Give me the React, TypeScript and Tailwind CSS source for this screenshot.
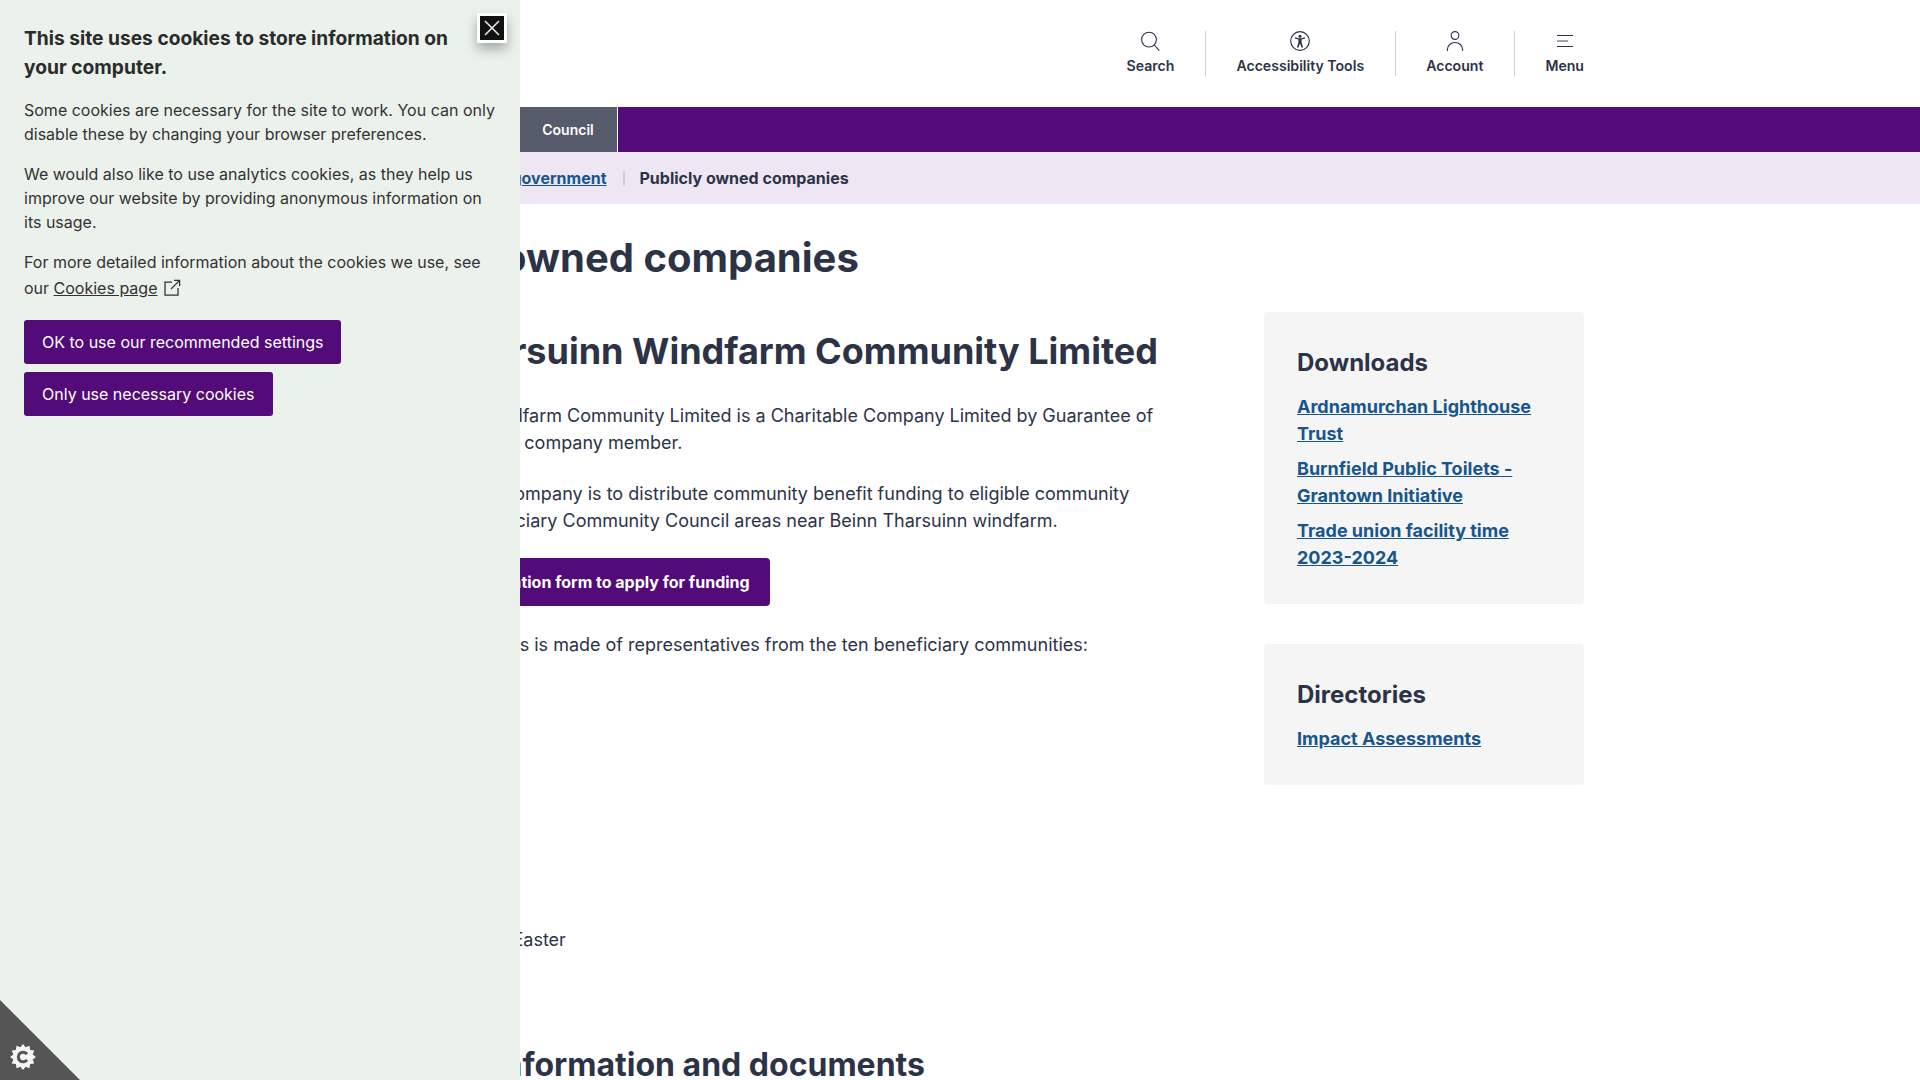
const communities = [
  "Ardross",
  "Alness",
  "Bonar Bridge",
  "Edderton",
  "Evanton",
  "Invergordon",
  "Kincardine",
  "Strathpeffer",
  "Tain",
  "Kilmuir and Logie Easter",
];

const downloads = [
  ["Ardnamurchan Lighthouse", "Trust"],
  ["Burnfield Public Toilets -", "Grantown Initiative"],
  ["Trade union facility time", "2023-2024"],
];

function SearchIcon() {
  return (
    <svg viewBox="0 0 20 20" className="h-5 w-5" fill="none" stroke="#2c3347" strokeWidth="1.1">
      <circle cx="9" cy="8.6" r="7.4" />
      <path d="M14.3 14l5 5.6" />
    </svg>
  );
}

function AccessibilityIcon() {
  return (
    <svg viewBox="0 0 20 20" className="h-5 w-5" fill="none">
      <circle cx="10" cy="10" r="9.3" stroke="#2c3347" strokeWidth="1.2" />
      <circle cx="10" cy="5.2" r="1.5" fill="#2c3347" />
      <path d="M4.8 7.4l3.6 1v3.2l-1.5 4.7 1.4.4 1.7-4.2 1.7 4.2 1.4-.4-1.5-4.7V8.400l3.600-1-.3-1.100-3.700.9H8.800l-3.700-.9z" fill="#2c3347" />
    </svg>
  );
}

function AccountIcon() {
  return (
    <svg viewBox="0 0 20 20" className="h-5 w-5" fill="none" stroke="#2c3347" strokeWidth="1.1">
      <circle cx="10" cy="4.500" r="3.900" />
      <path d="M2.400 20v-1.500c0-4 3.400-7 7.600-7s7.600 3 7.600 7V20" />
    </svg>
  );
}

function MenuIcon() {
  return (
    <svg viewBox="0 0 20 20" className="h-5 w-5" fill="none" strokeWidth="1.100">
      <path d="M2 4.500h16M2 15.500h16" stroke="#2c3347" />
      <path d="M2 10h11" stroke="#7c8090" strokeWidth="1.400" />
    </svg>
  );
}

function ExternalIcon() {
  return (
    <svg viewBox="0 0 18 18" className="ml-[6px] inline-block h-[18px] w-[18px] align-[-3px]" fill="none" stroke="#333" strokeWidth="1.300">
      <path d="M9 3.200H2v13h13V9" />
      <path d="M8 10l8.400-8.400M11 1.400h5.600V7" />
    </svg>
  );
}

function CookieGear() {
  const pts: string[] = [];
  for (let i = 0; i < 24; i++) {
    const r = i % 2 === 0 ? 13 : 10;
    const a = (i * Math.PI) / 12;
    pts.push(`${13 + r * Math.sin(a)},${13 - r * Math.cos(a)}`);
  }
  return (
    <svg viewBox="0 0 26 26" className="h-[26px] w-[26px]">
      <polygon points={pts.join(" ")} fill="#f5f5f5" />
      <path d="M17 10.200a4.800 4.800 0 1 0 0 5.600" fill="none" stroke="#555" strokeWidth="3" />
    </svg>
  );
}

function HeaderTool({ icon, label, last }: { icon: React.ReactNode; label: string; last?: boolean }) {
  return (
    <div className={last ? "flex h-[45px] flex-col items-center pl-[30px]" : "flex h-[45px] flex-col items-center border-r border-[#d0d0d0] pl-[30px] pr-[31px]"}>
      {icon}
      <span className="mt-[5px] text-[14.1px] leading-5 font-semibold text-[#2c3347]">{label}</span>
    </div>
  );
}

function SideCard({ title, children }: { title: string; children: React.ReactNode }) {
  return (
    <section className="rounded-[4px] bg-[#f5f5f5] px-[33px] pt-[34px] pb-[33px]">
      <h2 className="mb-[13px] text-2xl leading-[34px] font-bold text-[#2c3347]">{title}</h2>
      {children}
    </section>
  );
}

function CookiePanel() {
  return (
    <aside className="absolute inset-y-0 left-0 z-10 w-[520px] bg-[#eaf2eb] pl-6 pr-6 text-base leading-6 text-[#333]">
      <button className="absolute top-[13px] left-[477px] flex h-[30px] w-[30px] items-center justify-center border-[3px] border-white bg-[#111] shadow-[0_6px_12px_rgba(0,0,0,0.3)]">
        <svg viewBox="0 0 16 16" className="h-4 w-4" fill="none" stroke="#eee" strokeWidth="1.500">
          <path d="M1 1l14 14M15 1L1 15" />
        </svg>
      </button>
      <h2 className="mt-6 mb-4 w-[460px] text-[19.2px] leading-[29px] font-bold text-[#2b2b2b]">
        This site uses cookies to store information on your computer.
      </h2>
      <p className="mb-4">
        Some cookies are necessary for the site to work. You can only disable these by changing your browser preferences.
      </p>
      <p className="mb-[15px]">
        We would also like to use analytics cookies, as they help us improve our website by providing anonymous information on its usage.
      </p>
      <p className="mb-[19px] leading-[26px]">
        For more detailed information about the cookies we use, see our <a className="underline">Cookies page</a>
        <ExternalIcon />
      </p>
      <div className="flex flex-col items-start gap-2">
        <button className="h-11 rounded-[3px] bg-[#520b78] px-[18px] text-white">OK to use our recommended settings</button>
        <button className="h-11 rounded-[3px] bg-[#520b78] px-[18px] text-white">Only use necessary cookies</button>
      </div>
      <div className="absolute bottom-0 left-0 h-20 w-20 bg-[#555] [clip-path:polygon(0_0,100%_100%,0_100%)]">
        <div className="absolute bottom-[10px] left-[10px] flex">
          <CookieGear />
        </div>
      </div>
    </aside>
  );
}

export default function App() {
  return (
    <div className="relative h-screen overflow-hidden bg-white font-['Inter',sans-serif] text-[#2c3347]">
      <CookiePanel />

      <header className="h-[107px]">
        <div className="mx-auto flex w-[1248px] justify-end pt-[31px]">
          <HeaderTool icon={<SearchIcon />} label="Search" />
          <HeaderTool icon={<AccessibilityIcon />} label="Accessibility Tools" />
          <HeaderTool icon={<AccountIcon />} label="Account" />
          <HeaderTool icon={<MenuIcon />} label="Menu" last />
        </div>
      </header>

      <nav className="h-[45px] bg-[#520b78]">
        <div className="mx-auto flex h-full w-[1248px] text-sm font-semibold text-white">
          <a className="flex w-[183px] items-center justify-center border-r border-white">Services</a>
          <a className="flex w-[99px] items-center justify-center border-r border-white bg-[#565c6c]">Council</a>
        </div>
      </nav>

      <div className="h-[52px] bg-[#eee6f2]">
        <div className="mx-auto flex h-full w-[1248px] items-center text-base font-bold">
          <a className="text-[#17568c] underline">Home</a>
          <span className="mr-[15px] ml-4 h-[15px] w-[2px] bg-[#cfcfd4]" />
          <a className="text-[#17568c] underline">Council and government</a>
          <span className="mr-[15px] ml-4 h-[15px] w-[2px] bg-[#cfcfd4]" />
          <span>Publicly owned companies</span>
        </div>
      </div>

      <main className="mx-auto w-[1248px]">
        <h1 className="mt-[29px] mb-[29px] text-[40px] leading-[50px] font-bold">Publicly owned companies</h1>
        <div className="flex justify-between">
          <div className="w-[832px] text-lg leading-[27px]">
            <h2 className="mt-[14px] mb-[26px] text-[36px] leading-[50px] font-bold">Beinn Tharsuinn Windfarm Community Limited</h2>
            <p className="mb-[24px]">
              Beinn Tharsuinn Windfarm Community Limited is a Charitable Company Limited by Guarantee of which the council is a company member.
            </p>
            <p className="mb-[24px]">
              The purpose of the company is to distribute community benefit funding to eligible community projects in the beneficiary Community Council areas near Beinn Tharsuinn windfarm.
            </p>
            <a className="mb-[25px] flex h-12 w-fit items-center rounded-[4px] bg-[#520b78] px-5 text-base font-bold whitespace-nowrap text-white">
              Complete the application form to apply for funding
            </a>
            <p className="mb-[25px]">The Board of Directors is made of representatives from the ten beneficiary communities:</p>
            <ul className="mb-[90px] pl-6">
              {communities.map((c) => (
                <li key={c}>{c}</li>
              ))}
            </ul>
            <h2 className="text-[32px] leading-[44px] font-bold">Company information and documents</h2>
          </div>
          <div className="flex w-[320px] flex-col gap-10 self-start">
            <SideCard title="Downloads">
              <ul className="flex flex-col gap-2">
                {downloads.map((d) => (
                  <li key={d[0]} className="text-lg leading-[27px] font-bold text-[#17568c] underline">
                    {d[0]}
                    <br />
                    {d[1]}
                  </li>
                ))}
              </ul>
            </SideCard>
            <SideCard title="Directories">
              <a className="block text-lg leading-[27px] font-bold text-[#17568c] underline">Impact Assessments</a>
            </SideCard>
          </div>
        </div>
      </main>
    </div>
  );
}
